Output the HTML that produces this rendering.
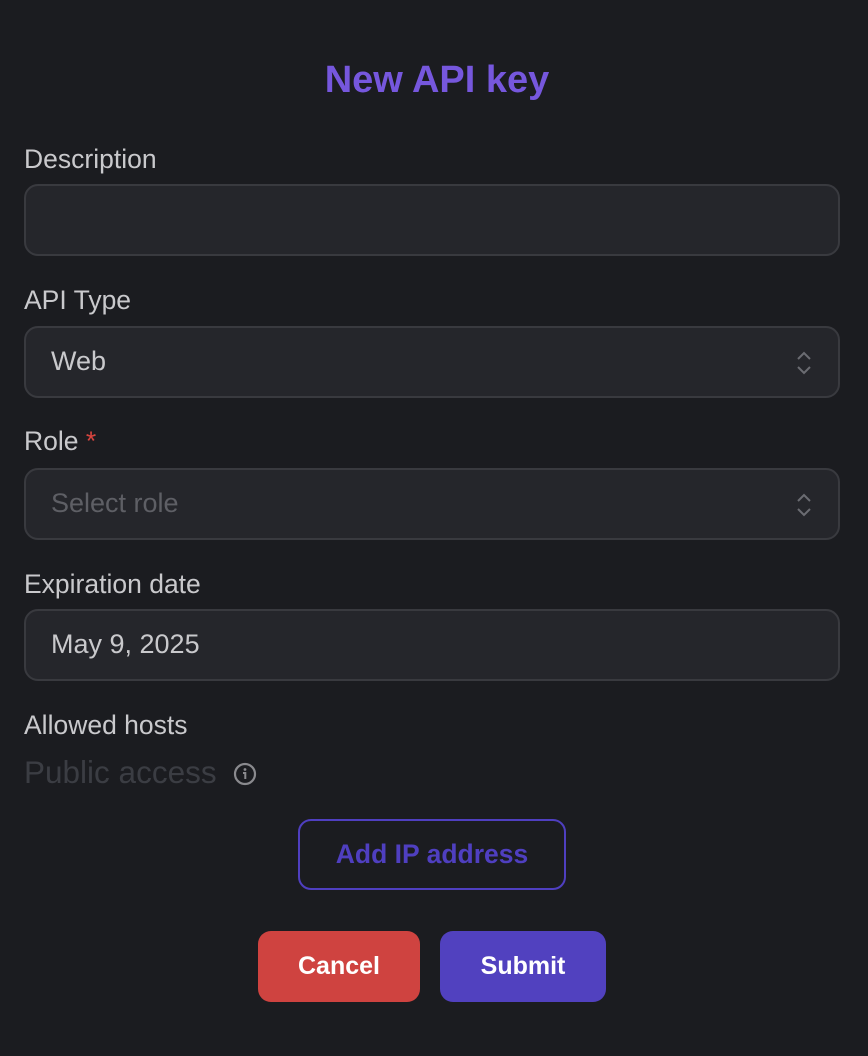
<!DOCTYPE html>
<html><head><meta charset="utf-8"><style>
body{margin:0;width:868px;height:1056px;background:#1b1c20;font-family:"Liberation Sans",sans-serif;position:relative;overflow:hidden}
.a{position:absolute;white-space:nowrap}
.lbl{font-size:26.5px;color:#c9c9cc;left:24px}
.in{position:absolute;left:24px;width:812px;height:68px;background:#25262b;border:2px solid #393a3f;border-radius:14px}
.val{position:absolute;left:25px;top:18px;font-size:27px;color:#c9c9cc}
.chev{position:absolute;right:26px;top:22px}
.btn{position:absolute;border-radius:13px;font-weight:bold;font-size:25px;text-align:center;color:#fff}
</style></head><body>
<div class="a" style="left:0;width:874px;text-align:center;top:59px;font-size:38px;font-weight:bold;color:#7657dd">New API key</div>
<div class="a lbl" style="top:144px">Description</div>
<div class="in" style="top:184px"></div>
<div class="a lbl" style="top:285px">API Type</div>
<div class="in" style="top:326px"><div class="val">Web</div>
<svg class="chev" width="16" height="26" viewBox="0 0 16 26"><path d="M2 9 L8 3 L14 9 M2 17 L8 23 L14 17" fill="none" stroke="#6b6c72" stroke-width="2"/></svg></div>
<div class="a lbl" style="top:426px">Role <span style="color:#d9453f">*</span></div>
<div class="in" style="top:468px"><div class="val" style="color:#5e5f65">Select role</div>
<svg class="chev" width="16" height="26" viewBox="0 0 16 26"><path d="M2 9 L8 3 L14 9 M2 17 L8 23 L14 17" fill="none" stroke="#6b6c72" stroke-width="2"/></svg></div>
<div class="a lbl" style="top:569px">Expiration date</div>
<div class="in" style="top:609px"><div class="val">May 9, 2025</div></div>
<div class="a lbl" style="top:710px">Allowed hosts</div>
<div class="a" style="left:24px;top:754px;font-size:31.5px;color:#3b3d43">Public access</div>
<svg class="a" style="left:233px;top:762px" width="24" height="24" viewBox="0 0 24 24"><circle cx="12" cy="12" r="10" fill="none" stroke="#8a8a8e" stroke-width="2.2"/><circle cx="12" cy="7.5" r="1.4" fill="#8a8a8e"/><path d="M10 11h2.3v6" fill="none" stroke="#8a8a8e" stroke-width="2"/></svg>
<div class="btn" style="left:298px;top:819px;width:264px;height:67px;line-height:67px;border:2px solid #4f3fc0;color:#4f3fc0;font-size:26.5px">Add IP address</div>
<div class="btn" style="left:258px;top:931px;width:162px;height:71px;line-height:71px;background:#cf4340">Cancel</div>
<div class="btn" style="left:440px;top:931px;width:166px;height:71px;line-height:71px;background:#5141bf">Submit</div>
</body></html>
